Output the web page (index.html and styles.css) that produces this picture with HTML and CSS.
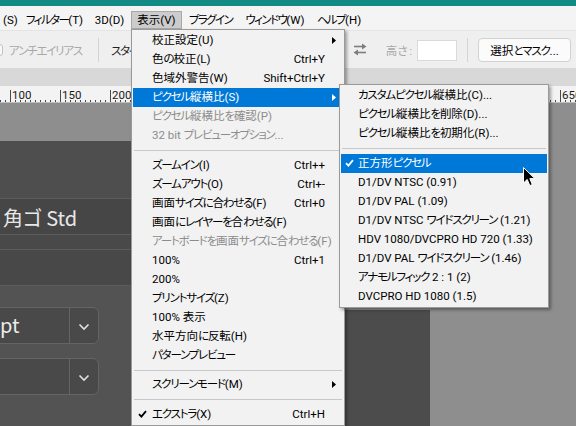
FILE: index.html
```html
<!DOCTYPE html>
<html lang="ja">
<head>
<meta charset="utf-8">
<title>表示メニュー</title>
<link rel="stylesheet" href="styles.css">
</head>
<body>
<div class="app">
  <div class="titlebar"></div>
  <nav class="menubar">
    <span class="mb-item w-s">(S)</span>
    <span class="mb-item w-filter"><span class="k">フィルター</span>(T)</span>
    <span class="mb-item w-3d">3D(D)</span>
    <span class="mb-item w-view active">表示(V)</span>
    <span class="mb-item w-plugin"><span class="k">プラグイン</span></span>
    <span class="mb-item w-window"><span class="k">ウィンドウ</span>(W)</span>
    <span class="mb-item w-help"><span class="k">ヘルプ</span>(H)</span>
  </nav>
  <div class="toolbar">
    <div class="tb-left">
      <span class="checkbox"></span>
      <span class="tb-disabled aa k">アンチエイリアス</span>
      <span class="tb-sep first-sep"></span>
      <span class="tb-text style"><span class="k">スタイル</span> :</span>
    </div>
    <div class="tb-right">
      <svg class="swap" width="14" height="13" viewBox="0 0 14 13">
        <path d="M1 3.5H10" stroke="#7d7d7d" stroke-width="1.6"/>
        <polygon points="9,0.5 13.5,3.5 9,6.5" fill="#7d7d7d"/>
        <path d="M4 9.5H13" stroke="#7d7d7d" stroke-width="1.6"/>
        <polygon points="5,6.5 0.5,9.5 5,12.5" fill="#7d7d7d"/>
      </svg>
      <span class="tb-disabled height-label">高<span class="k">さ</span> :</span>
      <span class="tb-input"></span>
      <span class="tb-sep"></span>
      <button class="tb-button">選択<span class="k">とマスク</span>...</button>
    </div>
  </div>
  <div class="band"></div>
  <div class="ruler">
    <span class="rl">100</span><span class="rl">150</span><span class="rl">200</span><span class="rl"></span><span class="rl"></span><span class="rl"></span><span class="rl"></span><span class="rl"></span><span class="rl"></span><span class="rl"></span><span class="rl"></span><span class="rl">650</span>
  </div>
  <div class="workspace">
    <div class="panel">
      <div class="prow prow-a"></div>
      <div class="prow prow-font">角ゴ Std</div>
      <div class="prow prow-c"></div>
      <div class="prow prow-d"></div>
      <div class="pfields">
        <div class="field">
          <span class="field-val">pt</span>
          <span class="field-dd"><svg width="12" height="8" viewBox="0 0 12 8"><path d="M1.5 1.5L6 6L10.5 1.5" fill="none" stroke="#e0e0e0" stroke-width="1.6"/></svg></span>
        </div>
        <div class="field">
          <span class="field-val"></span>
          <span class="field-dd"><svg width="12" height="8" viewBox="0 0 12 8"><path d="M1.5 1.5L6 6L10.5 1.5" fill="none" stroke="#e0e0e0" stroke-width="1.6"/></svg></span>
        </div>
      </div>
    </div>
    <div class="canvas">
      <div class="doc"></div>
    </div>
  </div>

  <div class="menu main-menu">
    <div class="mi"><span class="ck"></span><span class="lb">校正設定(U)</span><span class="sc"></span><span class="ar"><svg width="4" height="7" viewBox="0 0 4 7"><polygon points="0,0 4,3.5 0,7" fill="#000"/></svg></span></div>
    <div class="mi"><span class="ck"></span><span class="lb">色<span class="k">の</span>校正(L)</span><span class="sc">Ctrl+Y</span><span class="ar"></span></div>
    <div class="mi"><span class="ck"></span><span class="lb">色域外警告(W)</span><span class="sc">Shift+Ctrl+Y</span><span class="ar"></span></div>
    <div class="mi hl"><span class="ck"></span><span class="lb"><span class="k">ピクセル</span>縦横比(S)</span><span class="sc"></span><span class="ar"><svg width="4" height="7" viewBox="0 0 4 7"><polygon points="0,0 4,3.5 0,7" fill="#fff"/></svg></span></div>
    <div class="mi dis"><span class="ck"></span><span class="lb"><span class="k">ピクセル</span>縦横比<span class="k">を</span>確認(P)</span><span class="sc"></span><span class="ar"></span></div>
    <div class="mi dis"><span class="ck"></span><span class="lb">32 bit <span class="k">プレビューオプション</span>...</span><span class="sc"></span><span class="ar"></span></div>
    <div class="sep"></div>
    <div class="mi"><span class="ck"></span><span class="lb"><span class="k">ズームイン</span>(I)</span><span class="sc">Ctrl++</span><span class="ar"></span></div>
    <div class="mi"><span class="ck"></span><span class="lb"><span class="k">ズームアウト</span>(O)</span><span class="sc">Ctrl+-</span><span class="ar"></span></div>
    <div class="mi"><span class="ck"></span><span class="lb">画面<span class="k">サイズに合わせる</span>(F)</span><span class="sc">Ctrl+0</span><span class="ar"></span></div>
    <div class="mi"><span class="ck"></span><span class="lb">画面<span class="k">にレイヤーを</span>合<span class="k">わせる</span>(F)</span><span class="sc"></span><span class="ar"></span></div>
    <div class="mi dis"><span class="ck"></span><span class="lb"><span class="k">アートボードを</span>画面<span class="k">サイズに</span>合<span class="k">わせる</span>(F)</span><span class="sc"></span><span class="ar"></span></div>
    <div class="mi"><span class="ck"></span><span class="lb">100%</span><span class="sc">Ctrl+1</span><span class="ar"></span></div>
    <div class="mi"><span class="ck"></span><span class="lb">200%</span><span class="sc"></span><span class="ar"></span></div>
    <div class="mi"><span class="ck"></span><span class="lb"><span class="k">プリントサイズ</span>(Z)</span><span class="sc"></span><span class="ar"></span></div>
    <div class="mi"><span class="ck"></span><span class="lb">100% 表示</span><span class="sc"></span><span class="ar"></span></div>
    <div class="mi"><span class="ck"></span><span class="lb">水平方向<span class="k">に</span>反転(H)</span><span class="sc"></span><span class="ar"></span></div>
    <div class="mi"><span class="ck"></span><span class="lb"><span class="k">パターンプレビュー</span></span><span class="sc"></span><span class="ar"></span></div>
    <div class="sep"></div>
    <div class="mi"><span class="ck"></span><span class="lb"><span class="k">スクリーンモード</span>(M)</span><span class="sc"></span><span class="ar"><svg width="4" height="7" viewBox="0 0 4 7"><polygon points="0,0 4,3.5 0,7" fill="#000"/></svg></span></div>
    <div class="sep"></div>
    <div class="mi"><span class="ck"><svg width="9" height="8" viewBox="0 0 9 8"><path d="M1 4.2L3.4 6.6L8 1.2" fill="none" stroke="#000" stroke-width="1.8"/></svg></span><span class="lb"><span class="k">エクストラ</span>(X)</span><span class="sc">Ctrl+H</span><span class="ar"></span></div>
  </div>

  <div class="menu sub-menu">
    <div class="si"><span class="ck"></span><span class="lb"><span class="k">カスタムピクセル</span>縦横比(C)...</span></div>
    <div class="si"><span class="ck"></span><span class="lb"><span class="k">ピクセル</span>縦横比<span class="k">を</span>削除(D)...</span></div>
    <div class="si"><span class="ck"></span><span class="lb"><span class="k">ピクセル</span>縦横比<span class="k">を</span>初期化(R)...</span></div>
    <div class="sep"></div>
    <div class="si hl"><span class="ck"><svg width="9" height="8" viewBox="0 0 9 8"><path d="M1 4.2L3.4 6.6L8 1.2" fill="none" stroke="#fff" stroke-width="1.8"/></svg></span><span class="lb">正方形<span class="k">ピクセル</span></span></div>
    <div class="si"><span class="ck"></span><span class="lb">D1/DV NTSC (0.91)</span></div>
    <div class="si"><span class="ck"></span><span class="lb">D1/DV PAL (1.09)</span></div>
    <div class="si"><span class="ck"></span><span class="lb">D1/DV NTSC <span class="k">ワイドスクリーン</span> (1.21)</span></div>
    <div class="si"><span class="ck"></span><span class="lb">HDV 1080/DVCPRO HD 720 (1.33)</span></div>
    <div class="si"><span class="ck"></span><span class="lb">D1/DV PAL <span class="k">ワイドスクリーン</span> (1.46)</span></div>
    <div class="si"><span class="ck"></span><span class="lb"><span class="k">アナモルフィック</span> 2 : 1 (2)</span></div>
    <div class="si"><span class="ck"></span><span class="lb">DVCPRO HD 1080 (1.5)</span></div>
  </div>

  <svg class="cursor" width="13" height="20" viewBox="0 0 13 20">
    <path d="M0.5 0.5V16L4.2 12.4L6.8 18.6L9.3 17.6L6.8 11.6H11.8Z" fill="#000" stroke="#fff" stroke-width="1"/>
  </svg>
</div>
</body>
</html>
```

FILE: styles.css
```css
* { box-sizing: border-box; margin: 0; padding: 0; }
html, body { width: 576px; height: 426px; overflow: hidden; }
body {
  font-family: Roboto, "Noto Sans CJK JP", sans-serif;
  font-size: 11.5px;
  font-feature-settings: "palt";
  color: #000;
  background: #8e8e8e;
}
.app {
  position: relative;
  width: 576px;
  height: 426px;
  overflow: hidden;
  display: flex;
  flex-direction: column;
}

/* narrow kana (UI font has proportional, narrow kana) */
.k { letter-spacing: -1.2px; }

/* title + menubar */
.titlebar { height: 6px; flex: none; background: #138a84; }
.menubar {
  height: 24px;
  flex: none;
  display: flex;
  align-items: flex-end;
  padding-bottom: 1px;
  background: #f4f4f4;
  white-space: nowrap;
}
.mb-item {
  height: 18px;
  line-height: 16px;
  flex: none;
  display: flex;
  justify-content: center;
  border: 1px solid transparent;
}
.mb-item .k { letter-spacing: -1.6px; }
.w-s { width: 21px; }
.w-filter { width: 67px; }
.w-3d { width: 43px; }
.w-view { width: 51px; }
.w-plugin { width: 57px; }
.w-window { width: 72px; }
.w-help { width: 56px; }
.mb-item.active { background: #cccccc; border-color: #a8a8a8; }

/* toolbar */
.toolbar {
  height: 38px;
  flex: none;
  display: flex;
  align-items: center;
  background: #efefef;
  border-top: 1px solid #e4e4e4;
  white-space: nowrap;
}
.tb-left { display: flex; align-items: center; }
.checkbox {
  width: 12px; height: 12px;
  margin-left: -9px;
  border: 1px solid #c4c4c4;
  border-radius: 3px;
  background: #f8f8f8;
}
.tb-disabled { color: #a8a8a8; }
.aa { margin-left: 6px; }
.tb-sep { width: 1px; height: 24px; background: #d4d4d4; }
.first-sep { margin-left: 16px; }
.style { margin-left: 12px; color: #222; }
.tb-right {
  margin-left: auto;
  padding-right: 5px;
  display: flex;
  align-items: center;
}
.swap { margin-right: 19px; }
.height-label { margin-right: 5px; }
.tb-input {
  width: 40px; height: 21px;
  margin-top: 1px;
  background: #fff;
  border: 1px solid #dadada;
  margin-right: 10px;
}
.tb-right .tb-sep { margin-right: 10px; }
.tb-button {
  width: 93px; height: 24px;
  font: inherit;
  font-feature-settings: "palt";
  color: #000;
  background: #fbfbfb;
  border: 1px solid #d2d2d2;
  border-radius: 4px;
}

/* band + ruler */
.band { height: 18px; flex: none; background: #d8d8d8; }
.ruler {
  height: 17px;
  flex: none;
  display: flex;
  padding-left: 10px;
  background-color: #f3f3f3;
  background-image: repeating-linear-gradient(to right, #4a4a4a 0 1px, transparent 1px 5px);
  background-size: 100% 2px;
  background-position: 0 100%;
  background-repeat: no-repeat;
  border-bottom: 1px solid #bcbcbc;
  white-space: nowrap;
}
.rl {
  width: 50px;
  flex: none;
  padding-left: 2px;
  padding-top: 2px;
  line-height: 15px;
  font-size: 11.5px;
  color: #1a1a1a;
  background: linear-gradient(#4a4a4a, #4a4a4a) no-repeat left bottom / 1px 12px;
}

/* workspace */
.workspace { flex: 1; display: flex; min-height: 0; }
.panel {
  width: 131px;
  flex: none;
  margin-top: 38px;
  background: #535353;
  display: flex;
  flex-direction: column;
  font-family: "Noto Sans CJK JP", sans-serif;
  color: #e8e8e8;
}
.prow { flex: none; border-bottom: 1px solid #5c5c5c; }
.prow-a { height: 58px; background: #4e4e4e; }
.prow-font {
  height: 36px;
  background: #464646;
  font-size: 20px;
  line-height: 38px;
  padding-left: 3px;
  white-space: nowrap;
}
.prow-c { height: 15px; background: #494949; }
.prow-d { height: 36px; background: #484848; }
.pfields {
  display: flex;
  flex-direction: column;
  gap: 14px;
  padding-top: 21px;
}
.field {
  width: 109px;
  height: 37px;
  margin-left: -10px;
  display: flex;
  border: 1px solid #646464;
  border-radius: 6px;
  background: #494949;
}
.field-val {
  flex: 1;
  padding-left: 9px;
  font-size: 20px;
  line-height: 33px;
  color: #ececec;
}
.field-dd {
  width: 29px;
  border-left: 1px solid #646464;
  display: flex;
  align-items: center;
  justify-content: center;
  padding-top: 2px;
}
.canvas { flex: 1; background: #8e8e8e; }
.doc {
  margin-left: 214px;
  margin-top: 207px;
  width: 85px;
  height: 120px;
  background: #4c4c4c;
}

/* menus */
.menu {
  position: absolute;
  background: #f2f2f2;
  border: 1px solid #9a9a9a;
  box-shadow: 2px 2px 3px rgba(0, 0, 0, 0.35);
  padding: 1px;
  white-space: nowrap;
}
.main-menu { left: 131px; top: 29px; width: 214px; }
.sub-menu { left: 339px; top: 84px; width: 210px; }
.mi {
  display: grid;
  grid-template-columns: 19px 1fr auto 18px;
  align-items: center;
  height: 19px;
  line-height: 19px;
}
.si {
  display: grid;
  grid-template-columns: 17px 1fr;
  align-items: center;
  height: 19px;
  line-height: 19px;
}
.ck { display: flex; align-items: center; height: 19px; padding-left: 4px; }
.mi .ck { padding-left: 5px; }
.sc { text-align: right; }
.ar { display: flex; align-items: center; justify-content: center; height: 19px; }
.hl { background: #0078d7; color: #fff; }
.dis { color: #8c8c8c; }
.sep {
  height: 10.5px;
  position: relative;
}
.sep::after {
  content: "";
  position: absolute;
  left: 1px; right: 1px; top: 5px;
  height: 1px;
  background: #c8c8c8;
}

.cursor { position: absolute; left: 523px; top: 167px; }
```
